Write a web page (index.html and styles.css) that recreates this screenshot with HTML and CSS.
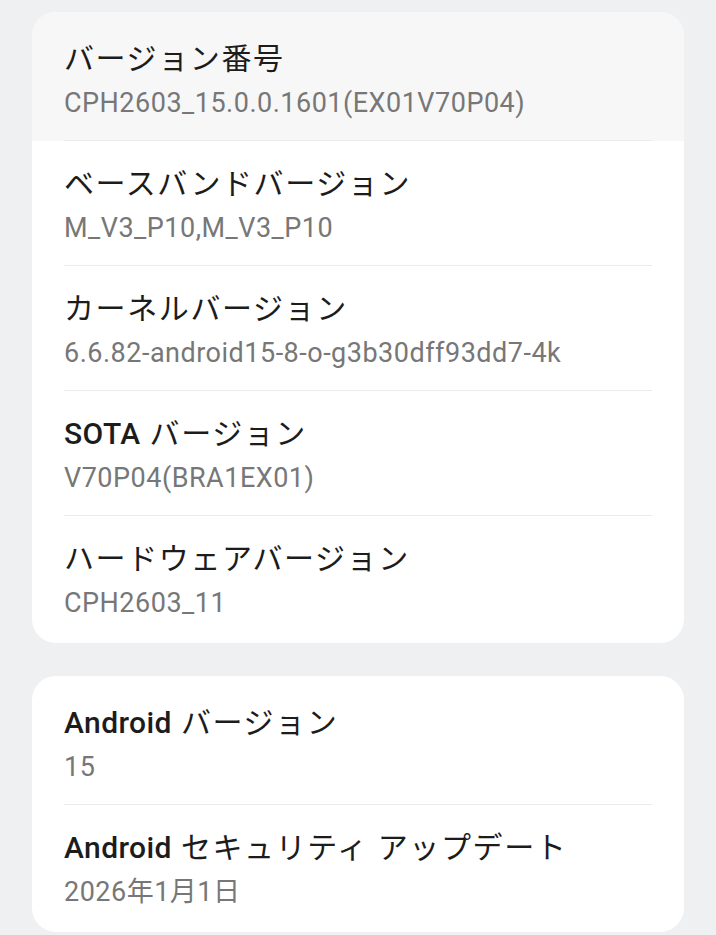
FILE: index.html
```html
<!DOCTYPE html>
<html lang="ja">
<head>
<meta charset="utf-8">
<link rel="stylesheet" href="styles.css">
</head>
<body>
<main class="page">
  <section class="card">
    <div class="row row-active">
      <div class="row-body">
        <div class="title">バージョン番号</div>
        <div class="sub">CPH2603_15.0.0.1601(EX01V70P04)</div>
      </div>
    </div>
    <div class="row">
      <div class="row-body">
        <div class="title">ベースバンドバージョン</div>
        <div class="sub">M_V3_P10,M_V3_P10</div>
      </div>
    </div>
    <div class="row">
      <div class="row-body">
        <div class="title">カーネルバージョン</div>
        <div class="sub">6.6.82-android15-8-o-g3b30dff93dd7-4k</div>
      </div>
    </div>
    <div class="row">
      <div class="row-body">
        <div class="title"><span class="latin">SOTA</span> バージョン</div>
        <div class="sub">V70P04(BRA1EX01)</div>
      </div>
    </div>
    <div class="row">
      <div class="row-body">
        <div class="title">ハードウェアバージョン</div>
        <div class="sub">CPH2603_11</div>
      </div>
    </div>
  </section>
  <section class="card">
    <div class="row">
      <div class="row-body">
        <div class="title"><span class="latin">Android</span> バージョン</div>
        <div class="sub">15</div>
      </div>
    </div>
    <div class="row">
      <div class="row-body">
        <div class="title"><span class="latin">Android</span> セキュリティ アップデート</div>
        <div class="sub">2026年1月1日</div>
      </div>
    </div>
  </section>
</main>
</body>
</html>
```
FILE: styles.css
```css
html, body {
  margin: 0;
  padding: 0;
  background: #eff0f2;
}
body {
  font-family: Roboto, "Noto Sans CJK JP", sans-serif;
}
.page {
  display: flex;
  flex-direction: column;
  gap: 33px;
  padding: 12px 32px 0;
}
.card {
  background: #ffffff;
  border-radius: 24px;
  overflow: hidden;
}
.row {
  padding: 0 32px;
}
.row:first-child {
  padding-top: 4px;
}
.row:last-child {
  padding-bottom: 3px;
}
.row-active {
  background: #f7f7f7;
}
.row-body {
  padding: 23px 0 17px;
  border-bottom: 1px solid #ebebeb;
}
.row:last-child .row-body {
  border-bottom: none;
}
.title {
  font-size: 30px;
  line-height: 40px;
  letter-spacing: 1.6px;
  color: #1c1c1c;
  white-space: nowrap;
}
.latin {
  font-weight: 500;
  letter-spacing: 0.4px;
}
.sub {
  margin-top: 4px;
  font-size: 27px;
  line-height: 40px;
  letter-spacing: 0.5px;
  color: #777777;
  white-space: nowrap;
}
```
